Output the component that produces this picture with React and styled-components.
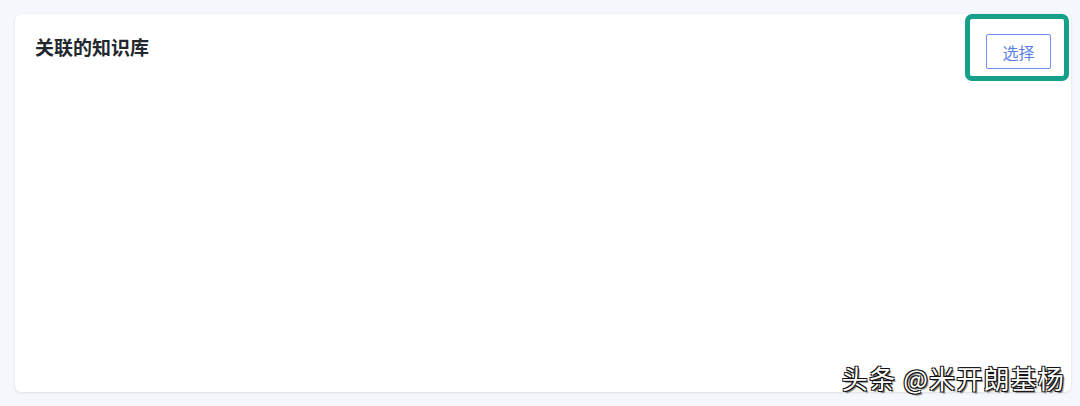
import React from 'react'
import styled, { createGlobalStyle } from 'styled-components'

// STYLING
const GlobalStyle = createGlobalStyle`
    html, body {
        margin: 0;
        padding: 0;
        background: #f4f7fb;
        font-family: Inter, "Noto Sans CJK SC", "Noto Sans", sans-serif;
    }
`

const Page = styled.div`
    position: relative;
    width: 1080px;
    height: 406px;
    padding: 14px 9px 14px 15px;
    box-sizing: border-box;
`

const Card = styled.div`
    position: relative;
    height: 378px;
    background: #ffffff;
    border-radius: 6px;
    box-shadow: 0 1px 3px rgba(31, 35, 41, 0.1), 0 0 1px rgba(31, 35, 41, 0.08);
    padding: 20px 20px;
    box-sizing: border-box;
`

const Header = styled.div`
    display: flex;
    justify-content: space-between;
    align-items: center;
`

const Title = styled.h3`
    margin: 0;
    font-size: 19px;
    font-weight: 700;
    color: #23272e;
    line-height: 28px;
    margin-top: -6px;
`

const Button = styled.button`
    width: 65px;
    height: 35px;
    border: 1px solid #6f8ff0;
    border-radius: 2px;
    background: #fff;
    color: #5c7fe6;
    font-family: inherit;
    font-size: 16px;
    padding: 0;
    cursor: pointer;
`

const Highlight = styled.div`
    position: absolute;
    top: 0;
    right: 2px;
    width: 104px;
    height: 67px;
    box-sizing: border-box;
    border: 5px solid #16a08a;
    border-radius: 7px;
    pointer-events: none;
`

const Watermark = styled.div`
    position: absolute;
    right: 15px;
    bottom: 10px;
    font-family: "Noto Sans CJK SC", sans-serif;
    font-size: 26px;
    color: #fff;
    letter-spacing: 1.2px;
    text-shadow: 1px 1px 0 #111, -1px -1px 0 #111, 1px -1px 0 #111, -1px 1px 0 #111, 2px 2px 1px rgba(0,0,0,.5);
`

const App = () => {
    return (
        <>
            <GlobalStyle />
            <Page>
                <Card>
                    <Header>
                        <Title>关联的知识库</Title>
                        <Button>选择</Button>
                    </Header>
                    <Highlight />
                </Card>
                <Watermark>头条 @米开朗基杨</Watermark>
            </Page>
        </>
    );
};

export default App;
